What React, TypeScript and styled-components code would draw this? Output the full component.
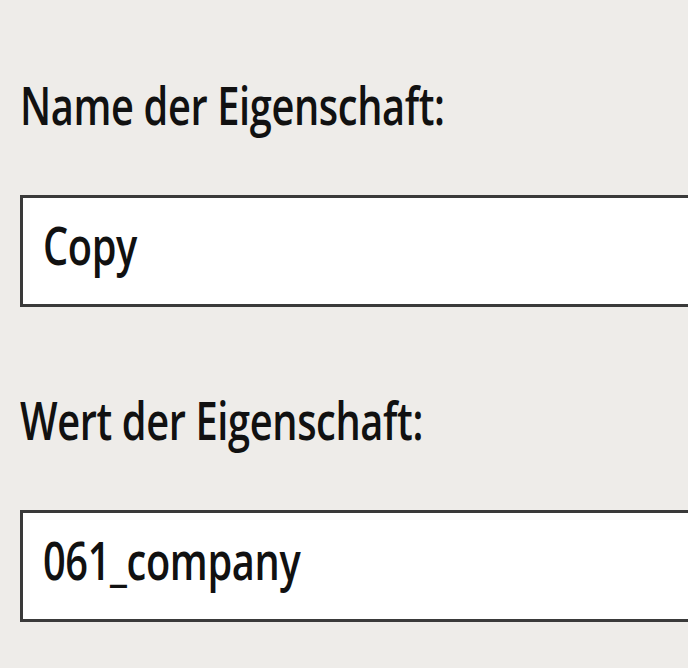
import React from "react";
import styled, { createGlobalStyle } from "styled-components";

const Global = createGlobalStyle`
  html, body {
    margin: 0;
    padding: 0;
    background: #eeece9;
    overflow: hidden;
  }
  body {
    font-family: "Open Sans", "Noto Sans", sans-serif;
    color: #111111;
  }
`;

const Panel = styled.div`
  width: 688px;
  height: 668px;
  box-sizing: border-box;
  padding: 79px 0 0 20px;
  display: flex;
  flex-direction: column;
  overflow: hidden;
`;

const Field = styled.div<{ $gapAfter: number }>`
  display: flex;
  flex-direction: column;
  gap: 64px;
  margin-bottom: ${(p) => p.$gapAfter}px;
`;

const Label = styled.div`
  font-size: 52px;
  line-height: 52px;
  height: 52px;
  white-space: nowrap;
`;

const Narrow = styled.span`
  display: inline-block;
  font-weight: 600;
  letter-spacing: -0.5px;
  transform: scaleX(0.765);
  transform-origin: left center;
`;

const Box = styled.div`
  width: 760px;
  height: 112px;
  box-sizing: border-box;
  background: #ffffff;
  border: 3px solid #3a3a3a;
  padding: 21px 0 0 20px;
  font-size: 52px;
  line-height: 52px;
  white-space: nowrap;
`;

export default function App() {
  return (
    <>
      <Global />
      <Panel>
        <Field $gapAfter={87}>
          <Label>
            <Narrow>Name der Eigenschaft:</Narrow>
          </Label>
          <Box>
            <Narrow>Copy</Narrow>
          </Box>
        </Field>
        <Field $gapAfter={0}>
          <Label>
            <Narrow>Wert der Eigenschaft:</Narrow>
          </Label>
          <Box>
            <Narrow>061_company</Narrow>
          </Box>
        </Field>
      </Panel>
    </>
  );
}
